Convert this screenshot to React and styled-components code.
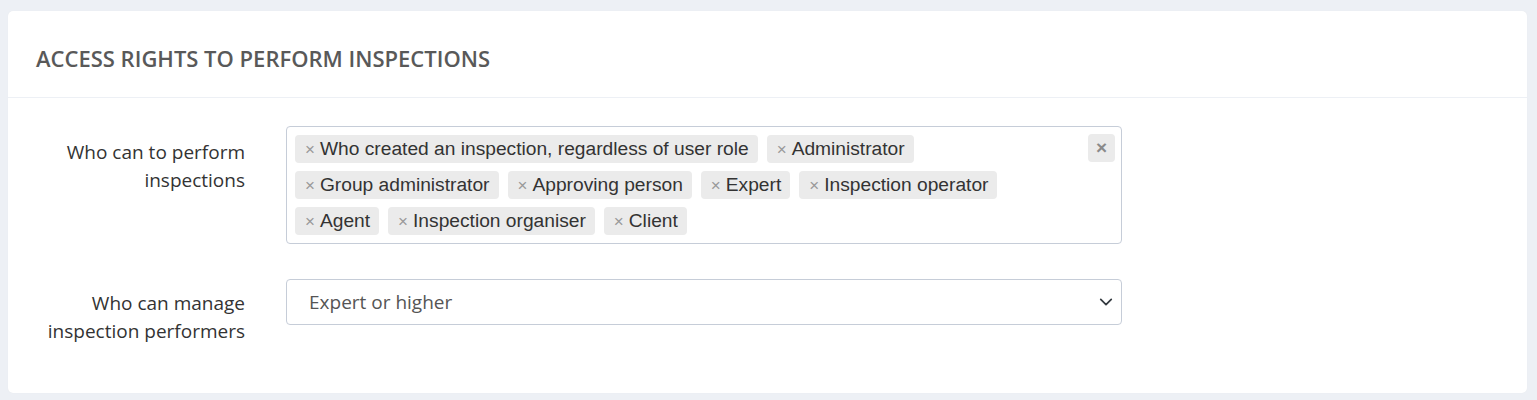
import React from "react";
import styled, { createGlobalStyle } from "styled-components";

const Global = createGlobalStyle`
  html, body { margin: 0; padding: 0; background: #edf0f5; }
  * { box-sizing: border-box; }
`;

const Page = styled.div`
  padding: 11px 10px 7px 8px;
  font-family: "Open Sans", sans-serif;
`;

const Card = styled.section`
  background: #fff;
  border-radius: 5px;
  box-shadow: 0 0 1px rgba(0,0,0,0.06);
`;

const CardHeader = styled.header`
  height: 87px;
  display: flex;
  align-items: center;
  padding: 8px 28px 0;
  border-bottom: 1px solid #edf0f5;
`;

const Title = styled.h2`
  margin: 0;
  font-size: 22px;
  font-weight: 600;
  color: #595959;
  text-transform: uppercase;
  letter-spacing: 0;
`;

const CardBody = styled.div`
  display: grid;
  grid-template-columns: 237px 836px;
  column-gap: 41px;
  row-gap: 35px;
  padding: 28px 0 48px;
`;

const Label = styled.label`
  text-align: right;
  font-size: 19px;
  line-height: 28px;
  color: #333;
  padding-top: ${(p) => p.$offset}px;
`;

const MultiBox = styled.div`
  position: relative;
  border: 1px solid #c6cdd8;
  border-radius: 4px;
  padding: 8px 44px 8px 8px;
  display: flex;
  flex-wrap: wrap;
  gap: 8px 9px;
  font-family: "Liberation Sans", Arial, sans-serif;
`;

const Tag = styled.span`
  display: inline-flex;
  align-items: center;
  height: 28px;
  padding: 0 9px 0 10px;
  background: #ebebeb;
  border-radius: 4px;
  font-size: 19.2px;
  color: #333;
`;

const TagX = styled.span`
  font-size: 17px;
  color: #999;
  margin-right: 5px;
  line-height: 1;
`;

const ClearButton = styled.span`
  position: absolute;
  top: 7px;
  right: 6px;
  width: 27px;
  height: 28px;
  border-radius: 4px;
  background: #ebebeb;
  display: flex;
  align-items: center;
  justify-content: center;
  color: #8a8a8a;
  font-size: 19px;
  font-weight: 700;
`;

const SelectBox = styled.div`
  height: 46px;
  border: 1px solid #c6cdd8;
  border-radius: 4px;
  display: flex;
  align-items: center;
  justify-content: space-between;
  padding: 0 8px 0 22px;
  font-size: 19px;
  color: #555;
`;

const tags = [
  "Who created an inspection, regardless of user role",
  "Administrator",
  "Group administrator",
  "Approving person",
  "Expert",
  "Inspection operator",
  "Agent",
  "Inspection organiser",
  "Client",
];

export default function App() {
  return (
    <>
      <Global />
      <Page>
        <Card>
          <CardHeader>
            <Title>Access rights to perform inspections</Title>
          </CardHeader>
          <CardBody>
            <Label $offset={12}>Who can to perform<br />inspections</Label>
            <MultiBox>
              {tags.map((t) => (
                <Tag key={t}>
                  <TagX>×</TagX>
                  {t}
                </Tag>
              ))}
              <ClearButton>×</ClearButton>
            </MultiBox>
            <Label $offset={10}>Who can manage<br />inspection performers</Label>
            <div>
              <SelectBox>
                <span>Expert or higher</span>
                <svg width="14" height="14" viewBox="0 0 16 16">
                  <path d="M2 5l6 6 6-6" fill="none" stroke="#343a40" strokeWidth="2" strokeLinecap="round" strokeLinejoin="round" />
                </svg>
              </SelectBox>
            </div>
          </CardBody>
        </Card>
      </Page>
    </>
  );
}
